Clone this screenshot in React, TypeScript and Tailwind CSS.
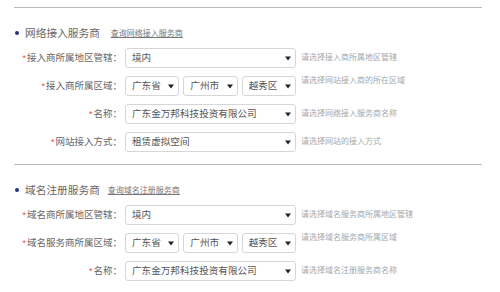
const font = { fontFamily: '"Liberation Sans", "Noto Sans CJK SC", sans-serif' }

function Arrow() {
  return (
    <svg width="6" height="5" viewBox="0 0 6 5" className="shrink-0">
      <path d="M0 0.5h6L3 4.5z" fill="#222" />
    </svg>
  )
}

function Select({ value, className = '' }: { value: string; className?: string }) {
  return (
    <div className={`flex items-center justify-between h-5 border border-[#d6d6d6] rounded-[3px] bg-white pl-[6px] pr-[4px] ${className}`}>
      <span className="text-[9.6px] text-[#555] leading-none whitespace-nowrap overflow-hidden">{value}</span>
      <Arrow />
    </div>
  )
}

function Row({ label, hint, children, top = false }: { label: string; hint: string; children: React.ReactNode; top?: boolean }) {
  return (
    <div className="flex items-center h-5">
      <div className="w-[110px] shrink-0 text-right text-[9.5px] text-[#666] leading-none whitespace-nowrap pr-[2px]">
        <span className="text-[#ef4b36] text-[9px] mr-[1px]">*</span>
        {label}：
      </div>
      <div className="ml-[1px] w-[171px] shrink-0">{children}</div>
      <div className={`ml-[5px] text-[8px] text-[#a8a8a8] leading-[10px] whitespace-nowrap ${top ? 'self-start' : ''}`}>{hint}</div>
    </div>
  )
}

function Region() {
  return (
    <div className="grid grid-cols-3 gap-[4px]">
      <Select value="广东省" />
      <Select value="广州市" />
      <Select value="越秀区" />
    </div>
  )
}

function Section({ title, link, linkGap, children }: { title: string; link: string; linkGap: string; children: React.ReactNode }) {
  return (
    <div className="w-[468px] border-t border-[#b8b8b8]">
      <div className="flex items-center h-[14px] mt-[18px]">
        <span className="w-[4px] h-[4px] rounded-full bg-[#27337a] ml-[1px] mr-[6px]" />
        <span className="text-[10.7px] text-[#666] leading-none">{title}</span>
        <a href="#" className={`${linkGap} text-[8px] text-[#777] underline leading-none mt-[1px]`}>{link}</a>
      </div>
      <div className="flex flex-col gap-2 mt-[8px] pb-[12px]">{children}</div>
    </div>
  )
}

export default function App() {
  return (
    <div className="w-[500px] h-[292px] bg-white pl-[14px] pt-[7px] overflow-hidden" style={font}>
      <Section title="网络接入服务商" link="查询网络接入服务商" linkGap="ml-[11px]">
        <Row label="接入商所属地区管辖" hint="请选择接入商所属地区管辖">
          <Select value="境内" />
        </Row>
        <Row label="接入商所属区域" hint="请选择网站接入商的所在区域" top>
          <Region />
        </Row>
        <Row label="名称" hint="请选择网络接入服务商名称">
          <Select value="广东金万邦科技投资有限公司" />
        </Row>
        <Row label="网站接入方式" hint="请选择网站的接入方式">
          <Select value="租赁虚拟空间" />
        </Row>
      </Section>
      <Section title="域名注册服务商" link="查询域名注册服务商" linkGap="ml-[8px]">
        <Row label="域名商所属地区管辖" hint="请选择域名服务商所属地区管辖">
          <Select value="境内" />
        </Row>
        <Row label="域名服务商所属区域" hint="请选择域名服务商所属区域" top>
          <Region />
        </Row>
        <Row label="名称" hint="请选择域名注册服务商名称">
          <Select value="广东金万邦科技投资有限公司" />
        </Row>
      </Section>
    </div>
  )
}
